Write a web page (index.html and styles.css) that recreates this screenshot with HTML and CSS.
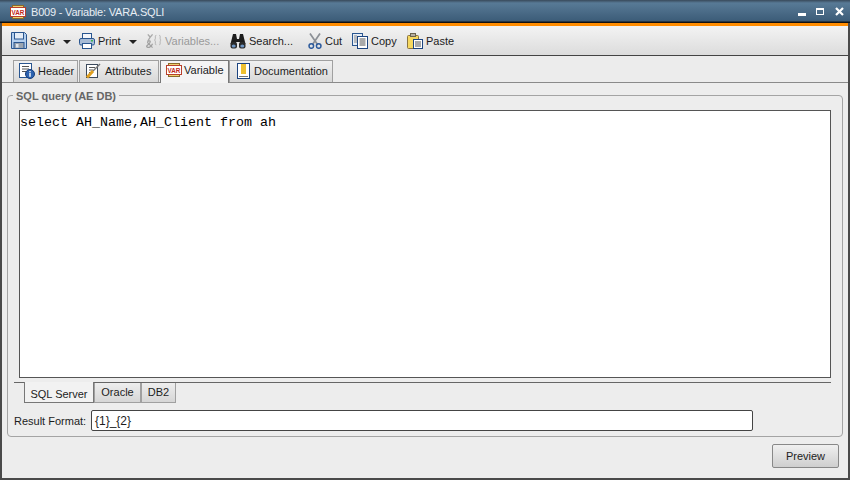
FILE: index.html
```html
<!DOCTYPE html>
<html lang="en">
<head>
<meta charset="utf-8">
<title>B009 - Variable: VARA.SQLI</title>
<link rel="stylesheet" href="styles.css">
</head>
<body>
<div class="window">
  <header class="titlebar">
    <svg class="ico title-ico" viewBox="0 0 16 14"><rect x="2.500" y=".5" width="11" height="13" fill="#f0d070" stroke="#8a6a2a"/><rect x=".5" y="2.500" width="15" height="9" fill="#fff" stroke="#b8402c"/><text x="8" y="9.500" class="var-text">VAR</text></svg>
    <span class="title-text">B009 - Variable: VARA.SQLI</span>
    <div class="winbtns">
      <span class="win-min"></span>
      <span class="win-max"></span>
      <svg class="win-close" viewBox="0 0 9 9"><path d="M1 1l7 7M8 1L1 8" stroke="#fff" stroke-width="2.200"/></svg>
    </div>
  </header>
  <div class="orange"></div>
  <nav class="toolbar">
    <div class="tool t-save">
      <svg class="ico" viewBox="0 0 16 17"><path d="M.5.500h13l2 2v14H.5z" fill="#b4cfee" stroke="#2a5690"/><rect x="3.500" y=".5" width="9" height="6.500" fill="#e4ecf6" stroke="#2a5690"/><rect x="3" y="10.500" width="10" height="6" fill="#9aa4b0" stroke="#2a5690"/><rect x="5" y="12" width="2.500" height="3.500" fill="#dfe6ee"/></svg>
      <span>Save</span>
    </div>
    <span class="caret"></span>
    <div class="tool t-print">
      <svg class="ico" viewBox="0 0 16 16"><rect x="3.500" y=".5" width="9" height="6" fill="#f4f6fa" stroke="#2a5690"/><rect x=".5" y="5.500" width="15" height="6.500" rx="1.500" fill="#a8bcd6" stroke="#2a5690"/><rect x="3.500" y="10.500" width="9" height="5" fill="#fff" stroke="#2a5690"/><rect x="12" y="7" width="2" height="1.500" fill="#3cb450"/></svg>
      <span>Print</span>
    </div>
    <span class="caret"></span>
    <div class="tool t-vars disabled">
      <svg class="ico" viewBox="0 0 18 16"><path d="M3 1l2.500 3L8 1M5.500 4L3 8" fill="none" stroke="#a8a8a8" stroke-width="1.400"/><path d="M12 2c-1.500 0-1 1-1 3s-1 2-1 2 1 0 1 2-.5 3 1 3M15 2c1.500 0 1 1 1 3s1 2 1 2-1 0-1 2 .5 3-1 3" fill="none" stroke="#b4b4b4"/><path d="M8 15L3 10c-1-2 2-3 2.500-1.500S3 12 2 13s1 2.500 3 1.500 3-3.500 3-3.500" fill="none" stroke="#a0a0a0" stroke-width="1.300"/></svg>
      <span>Variables...</span>
    </div>
    <div class="tool t-search">
      <svg class="ico" viewBox="0 0 16 16"><path d="M3 1h3l1 5h2l1-5h3l2.500 10H10V9H6v2H.5z" fill="#1c1c1c"/><rect x=".5" y="9" width="6.500" height="6.500" rx="2" fill="#2a2a2a"/><rect x="9" y="9" width="6.500" height="6.500" rx="2" fill="#2a2a2a"/><ellipse cx="3.700" cy="13" rx="2" ry="1.600" fill="#6f96c4"/><ellipse cx="12.300" cy="13" rx="2" ry="1.600" fill="#6f96c4"/></svg>
      <span>Search...</span>
    </div>
    <div class="tool t-cut">
      <svg class="ico" viewBox="0 0 16 16"><path d="M3 .5l7.500 11M13 .5L5.500 11.500" fill="none" stroke="#8c9096" stroke-width="1.700"/><circle cx="4.300" cy="13" r="2.300" fill="none" stroke="#2c5a9c" stroke-width="1.500"/><circle cx="11.700" cy="13" r="2.300" fill="none" stroke="#2c5a9c" stroke-width="1.500"/></svg>
      <span>Cut</span>
    </div>
    <div class="tool t-copy">
      <svg class="ico" viewBox="0 0 16 16"><rect x=".5" y=".5" width="10" height="12" fill="#e6edf6" stroke="#2a5690"/><rect x="5.500" y="3.500" width="10" height="12" fill="#fff" stroke="#1c4480"/><path d="M7.500 6h6M7.500 8h6M7.500 10h6M7.500 12h6" stroke="#555"/><path d="M2 3h3M2 5h3M2 7h3M2 9h3" stroke="#888"/></svg>
      <span>Copy</span>
    </div>
    <div class="tool t-paste">
      <svg class="ico" viewBox="0 0 16 16"><rect x=".5" y="2.500" width="11" height="13" rx="1" fill="#f6d860" stroke="#8a7440"/><rect x="3.500" y=".5" width="5" height="3" fill="#b8b0a0" stroke="#6c6450"/><rect x="6.500" y="6.500" width="9" height="9" fill="#fff" stroke="#1c4480"/><path d="M8 9h6M8 11h6M8 13h6" stroke="#555"/></svg>
      <span>Paste</span>
    </div>
  </nav>
  <div class="tabstrip">
    <div class="tab t-header">
      <svg class="ico" viewBox="0 0 16 16"><rect x=".5" y=".5" width="12" height="14" fill="#fff" stroke="#2a5690"/><path d="M3 3.500h7M3 6h7M3 8.500h4" stroke="#555"/><circle cx="11" cy="11" r="4.500" fill="#2c62b0" stroke="#173d78"/><rect x="10.300" y="10" width="1.400" height="3.800" fill="#fff"/><rect x="10.300" y="8" width="1.400" height="1.300" fill="#fff"/></svg>
      <span>Header</span>
    </div>
    <div class="tab t-attr">
      <svg class="ico" viewBox="0 0 16 16"><rect x="1.500" y="1.500" width="11" height="13" fill="#fff" stroke="#3c4a5c"/><path d="M4 4.500h6M4 7h4M4 9.500h2" stroke="#555"/><path d="M15 1L8 8" stroke="#777" stroke-width="1.500"/><path d="M8 8l-6 6.500" stroke="#e0a020" stroke-width="3"/></svg>
      <span>Attributes</span>
    </div>
    <div class="tab active t-var">
      <svg class="ico" viewBox="0 0 16 14"><rect x="2.500" y=".5" width="11" height="13" fill="#f0d070" stroke="#8a6a2a"/><rect x=".5" y="2.500" width="15" height="9" fill="#fff" stroke="#b8402c"/><text x="8" y="9.500" class="var-text">VAR</text></svg>
      <span>Variable</span>
    </div>
    <div class="tab t-doc">
      <svg class="ico" viewBox="0 0 16 16"><rect x="1.500" y=".5" width="12" height="15" fill="#fff" stroke="#1c4480"/><rect x="5" y="1" width="5" height="10" fill="#eec030"/><path d="M3 13.500h9" stroke="#777"/></svg>
      <span>Documentation</span>
    </div>
  </div>
  <main class="content">
    <section class="group">
      <h2 class="legend">SQL query (AE DB)</h2>
      <div class="sql">select AH_Name,AH_Client from ah</div>
      <div class="subtabs">
        <div class="subtab active st-sql">SQL Server</div>
        <div class="subtab st-ora">Oracle</div>
        <div class="subtab st-db2">DB2</div>
      </div>
      <div class="format">
        <label class="format-label">Result Format:</label>
        <div class="format-input">{1}_{2}</div>
      </div>
    </section>
    <div class="actions"><button class="preview">Preview</button></div>
  </main>
</div>
</body>
</html>
```
FILE: styles.css
```css
* { box-sizing: border-box; }
html, body { margin: 0; padding: 0; }
body { width: 850px; height: 480px; overflow: hidden; background: #3a3a3a; font-family: "Liberation Sans", Arial, sans-serif; font-size: 11px; color: #1c1c1c; }
.window { width: 850px; height: 480px; display: flex; flex-direction: column; border: 2px solid #4a4a4a; border-top: 0; background: #ededed; }
.ico { width: 16px; height: 16px; flex: none; display: block; }
.var-text { font: 700 6.300px "Liberation Sans", sans-serif; fill: #c02818; text-anchor: middle; }
.titlebar { height: 23px; flex: none; margin: 0 -2px; padding: 0 6px 0 10px; display: flex; align-items: center; background: linear-gradient(#38495a 0, #587a96 3px, #3c5c78 21px, #111 22px); font-size: 11px; }
.title-ico { height: 14px; margin-right: 5px; }
.title-text { color: #e8eef4; letter-spacing: -.2px; }
.winbtns { margin-left: auto; display: flex; align-items: center; gap: 10px; }
.win-min { width: 8px; height: 3px; background: #fff; margin-top: 5px; }
.win-max { width: 8px; height: 7px; border: 1px solid #fff; border-top-width: 2px; }
.win-close { width: 9px; height: 9px; margin-left: 1px; }
.orange { height: 3px; flex: none; background: #ff8c00; }
.toolbar { height: 30px; flex: none; padding-left: 9px; display: flex; align-items: center; background: linear-gradient(#f3f3f3, #dcdcdc); border-bottom: 1px solid #444; }
.tool { display: flex; align-items: center; gap: 3px; flex: none; }
.disabled { color: #9a9a9a; }
.caret { width: 0; height: 0; border: 4px solid transparent; border-top-color: #222; border-bottom: 0; margin-top: 2px; flex: none; }
.t-save { width: 52px; }
.t-save .ico { height: 17px; }
.t-print { width: 50px; margin-left: 8px; }
.t-vars { width: 85px; margin-left: 8px; }
.t-vars .ico { width: 17px; }
.t-search { width: 77px; }
.t-cut { width: 45px; gap: 2px; }
.t-copy { width: 55px; }
.tabstrip { height: 27px; flex: none; padding-left: 11px; display: flex; align-items: flex-end; border-bottom: 1px solid #8a8a8a; background: #ececec; }
.tab { height: 22px; margin-right: 1px; padding: 0 0 1px 5px; display: flex; align-items: center; gap: 3px; flex: none; border: 1px solid #a0a0a0; border-bottom: 0; background: linear-gradient(#f0f0f0, #d8d8d8); }
.t-header { width: 65px; }
.t-attr { width: 80px; gap: 4px; }
.tab.active { width: 69px; height: 23px; margin: 0 0 -1px 0; padding-bottom: 5px; gap: 2px; background: #f4f4f4; border-color: #777; position: relative; }
.t-var .ico { height: 14px; }
.t-doc { width: 104px; padding-left: 6px; gap: 2px; }
.content { flex: 1; min-height: 0; padding: 0 5px; display: flex; flex-direction: column; background: #ededed; }
.group { position: relative; height: 342px; margin-top: 12px; padding: 14px 11px 0 5px; border: 1px solid #a4a4a4; border-radius: 4px; flex: none; }
.legend { position: absolute; left: 5px; top: -7px; margin: 0; padding: 0 3px; background: #ededed; font-size: 11px; line-height: 14px; font-weight: 700; color: #666; }
.sql { height: 268px; margin-left: 6px; padding: 4px 0; background: #fff; border: 1px solid #555; font-family: "Liberation Mono", monospace; font-size: 13.330px; line-height: 15px; color: #000; white-space: pre; }
.subtabs { height: 22px; margin: 4px 0 0 1px; padding-left: 10px; display: flex; align-items: flex-start; border-top: 1px solid #666; }
.subtab { height: 20px; padding-bottom: 2px; display: flex; align-items: center; justify-content: center; flex: none; border: 1px solid #a0a0a0; border-top: 0; background: linear-gradient(#eee, #d6d6d6); }
.st-ora { width: 47px; }
.st-db2 { width: 35px; }
.subtab.active { width: 70px; height: 21px; margin-top: -1px; padding: 3px 0 0; background: #f2f2f2; border-color: #777; white-space: nowrap; }
.format { display: flex; align-items: center; margin: 6px 0 0 1px; }
.format-label { width: 77px; flex: none; white-space: nowrap; }
.format-input { width: 662px; height: 21px; padding: 0 2px 0 3px; display: flex; align-items: center; background: #fff; border: 1px solid #444; border-radius: 2px; font-size: 12px; }
.actions { display: flex; justify-content: flex-end; padding: 7px 4px 0 0; }
.preview { width: 67px; height: 24px; padding: 0; font: inherit; color: #222; border: 1px solid #888; border-radius: 2px; background: linear-gradient(#f0f0f0, #cfcfcf); }
```
